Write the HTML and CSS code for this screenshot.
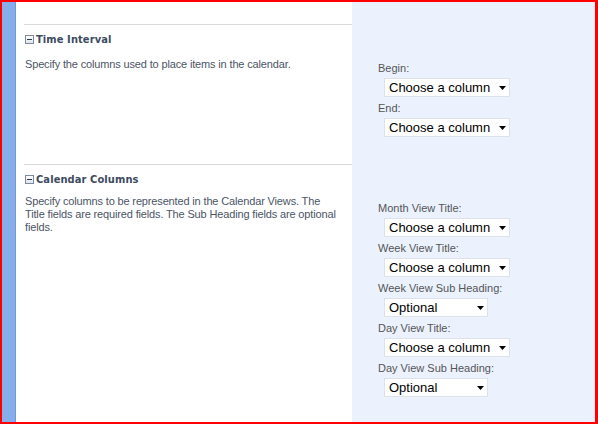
FILE: index.html
```html
<!DOCTYPE html>
<html lang="en">
<head>
<meta charset="utf-8">
<title>Calendar settings</title>
<link rel="stylesheet" href="styles.css">
</head>
<body>
<div class="frame">
  <div class="stripe"></div>
  <div class="content">
    <div class="row top">
      <div class="left"></div>
      <div class="right"></div>
    </div>

    <section class="row section">
      <div class="left">
        <h3 class="heading"><span class="toggle"></span>Time Interval</h3>
        <p class="desc">Specify the columns used to place items in the calendar.</p>
      </div>
      <div class="right">
        <div class="field">
          <div class="label">Begin:</div>
          <div class="select wide"><span>Choose a column</span><svg class="arrow" width="7" height="4" viewBox="0 0 7 4"><polygon points="0,0 7,0 3.5,4" fill="#000"/></svg></div>
        </div>
        <div class="field">
          <div class="label">End:</div>
          <div class="select wide"><span>Choose a column</span><svg class="arrow" width="7" height="4" viewBox="0 0 7 4"><polygon points="0,0 7,0 3.5,4" fill="#000"/></svg></div>
        </div>
      </div>
    </section>

    <section class="row section last">
      <div class="left">
        <h3 class="heading"><span class="toggle"></span>Calendar Columns</h3>
        <p class="desc close">Specify columns to be represented in the Calendar Views. The Title fields are required fields. The Sub Heading fields are optional fields.</p>
      </div>
      <div class="right">
        <div class="field">
          <div class="label">Month View Title:</div>
          <div class="select wide"><span>Choose a column</span><svg class="arrow" width="7" height="4" viewBox="0 0 7 4"><polygon points="0,0 7,0 3.5,4" fill="#000"/></svg></div>
        </div>
        <div class="field">
          <div class="label">Week View Title:</div>
          <div class="select wide"><span>Choose a column</span><svg class="arrow" width="7" height="4" viewBox="0 0 7 4"><polygon points="0,0 7,0 3.5,4" fill="#000"/></svg></div>
        </div>
        <div class="field">
          <div class="label">Week View Sub Heading:</div>
          <div class="select narrow"><span>Optional</span><svg class="arrow" width="7" height="4" viewBox="0 0 7 4"><polygon points="0,0 7,0 3.5,4" fill="#000"/></svg></div>
        </div>
        <div class="field">
          <div class="label">Day View Title:</div>
          <div class="select wide"><span>Choose a column</span><svg class="arrow" width="7" height="4" viewBox="0 0 7 4"><polygon points="0,0 7,0 3.5,4" fill="#000"/></svg></div>
        </div>
        <div class="field">
          <div class="label">Day View Sub Heading:</div>
          <div class="select narrow"><span>Optional</span><svg class="arrow" width="7" height="4" viewBox="0 0 7 4"><polygon points="0,0 7,0 3.5,4" fill="#000"/></svg></div>
        </div>
      </div>
    </section>
  </div>
</div>
</body>
</html>
```

FILE: styles.css
```css
html, body {
  margin: 0;
  padding: 0;
  background: #fff;
}

body {
  font-family: "Liberation Sans", Arial, sans-serif;
  font-size: 11px;
}

.frame {
  box-sizing: border-box;
  width: 598px;
  height: 424px;
  border-style: solid;
  border-color: #ff0000;
  border-width: 2px 3px 2px 2px;
  display: flex;
  overflow: hidden;
}

.stripe {
  width: 13px;
  background: #86aeea;
  border-right: 1px solid #7099da;
  flex: none;
}

.content {
  flex: 1;
  display: flex;
  flex-direction: column;
  min-height: 0;
}

.row {
  display: grid;
  grid-template-columns: 336px 1fr;
  flex: none;
}

.top {
  height: 22px;
}

.last {
  flex: 1 1 auto;
}

.right {
  background: #ebf2fe;
}

.section .left {
  margin-left: 8px;
  border-top: 1px solid #d9d9d9;
  padding: 7px 0 0 1px;
}

.section .right {
  padding: 37px 0 27px 26px;
  display: flex;
  flex-direction: column;
  gap: 4px;
}

.last .right {
  padding-bottom: 0;
}

.heading {
  margin: 0;
  display: flex;
  align-items: center;
  height: 14px;
  font-family: "DejaVu Sans Condensed", "DejaVu Sans", Verdana, sans-serif;
  font-stretch: condensed;
  font-size: 11px;
  letter-spacing: 0.1px;
  font-weight: bold;
  color: #3b4b60;
}

.toggle {
  box-sizing: border-box;
  width: 9px;
  height: 9px;
  margin-right: 2px;
  border: 1px solid #7b8aa1;
  background: linear-gradient(#ffffff, #dfe5ee);
  position: relative;
  flex: none;
}

.toggle::after {
  content: "";
  position: absolute;
  left: 1px;
  right: 1px;
  top: 3px;
  height: 1px;
  background: #2e3a4c;
}

.desc {
  margin: 12px 0 0;
  width: 316px;
  line-height: 13px;
  letter-spacing: -0.15px;
  color: #4b5566;
}

.desc.close {
  margin-top: 9px;
}

.field {
  display: flex;
  flex-direction: column;
  gap: 3px;
}

.label {
  line-height: 14px;
  color: #555555;
}

.select {
  box-sizing: border-box;
  height: 19px;
  margin-left: 6px;
  padding: 0 3px 0 4px;
  background: #fff;
  border: 1px solid #dde2e9;
  display: flex;
  align-items: center;
  justify-content: space-between;
  font-size: 13px;
  color: #000;
}

.select.wide {
  width: 126px;
}

.select.narrow {
  width: 104px;
}

.arrow {
  flex: none;
}
```
